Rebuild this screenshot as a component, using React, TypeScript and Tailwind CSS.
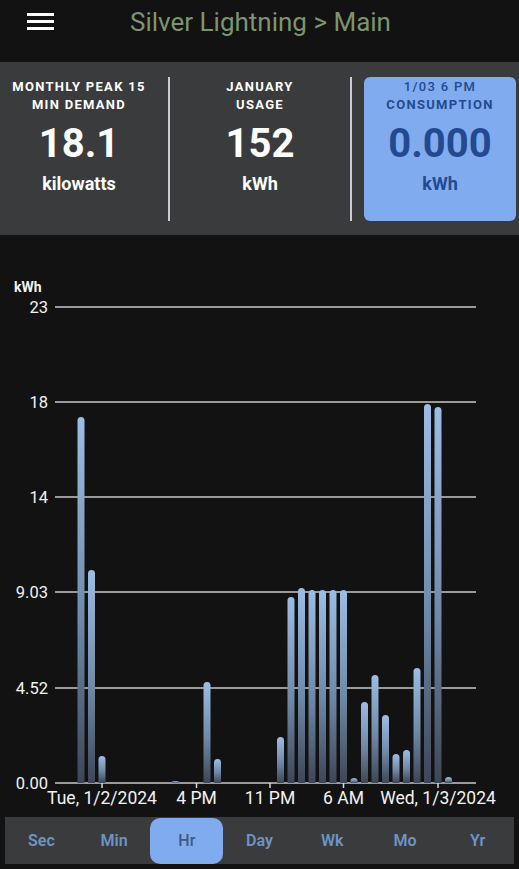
import React from "react";

const bars: [number, number][] = [
  [0, 366], [1, 213], [2, 27], [9, 2], [12, 101], [13, 24],
  [19, 46], [20, 186], [21, 195], [22, 193], [23, 193], [24, 193], [25, 193],
  [26, 5], [27, 81], [28, 108], [29, 68], [30, 29], [31, 33], [32, 115],
  [33, 379], [34, 376], [35, 6],
];

const grid = [
  { y: 307, label: "23" },
  { y: 402, label: "18" },
  { y: 497, label: "14" },
  { y: 592, label: "9.03" },
  { y: 688, label: "4.52" },
  { y: 783, label: "0.00" },
];

const ticks = [
  { i: 2, label: "Tue, 1/2/2024" },
  { i: 11, label: "4 PM" },
  { i: 18, label: "11 PM" },
  { i: 25, label: "6 AM" },
  { i: 34, label: "Wed, 1/3/2024" },
];

const tabs = ["Sec", "Min", "Hr", "Day", "Wk", "Mo", "Yr"];

const barX = (i: number) => 81 + i * 10.5;

function Stat({ lines, value, unit }: { lines: string[]; value: string; unit: string }) {
  return (
    <div className="flex flex-col items-center pt-[1px] text-white">
      {lines.map((l) => (
        <div key={l} className="text-[13px] leading-[18px] font-bold tracking-[1.3px]">
          {l}
        </div>
      ))}
      <div className="mt-[8px] text-[40px] leading-[44px] font-bold">{value}</div>
      <div className="mt-[7px] text-[18px] leading-[22px] font-bold">{unit}</div>
    </div>
  );
}

function Chart() {
  const base = 783;
  return (
    <svg width="519" height="582" viewBox="0 235 519 582" className="block">
      <defs>
        <linearGradient id="barGrad" x1="0" y1="0" x2="0" y2="1">
          <stop offset="0" stopColor="#9dbde4" />
          <stop offset="0.55" stopColor="#7089a8" />
          <stop offset="1" stopColor="#3d4656" />
        </linearGradient>
      </defs>
      <text x="14" y="292" fill="#f2f2f2" fontSize="14" fontWeight="700">
        kWh
      </text>
      {grid.map((g) => (
        <g key={g.label}>
          <line x1="55" x2="476" y1={g.y} y2={g.y} stroke="#c9c9c9" strokeWidth="1.5" />
          <text x="48" y={g.y + 6} fill="#f2f2f2" fontSize="16.5" textAnchor="end">
            {g.label}
          </text>
        </g>
      ))}
      {bars.map(([i, h]) => {
        const x = barX(i) - 3.5;
        const top = base - h;
        const r = Math.min(3.5, h / 2);
        return (
          <path
            key={i}
            d={`M${x},${base} V${top + r} A3.5,${r} 0 0 1 ${x + 7},${top + r} V${base} Z`}
            fill="url(#barGrad)"
          />
        );
      })}
      {ticks.map((t) => (
        <g key={t.label}>
          <line x1={barX(t.i)} x2={barX(t.i)} y1={base} y2={base + 5} stroke="#d8d8d8" strokeWidth="1.5" />
          <text x={barX(t.i)} y={base + 21} fill="#f2f2f2" fontSize="17.5" textAnchor="middle">
            {t.label}
          </text>
        </g>
      ))}
    </svg>
  );
}

export default function App() {
  return (
    <div className="w-[519px] h-[869px] overflow-hidden bg-[#121212] font-['Roboto',sans-serif]">
      <header className="h-[62px] flex items-start">
        <div className="ml-[27px] mt-[13px] flex flex-col gap-[4px]">
          <span className="block w-[27px] h-[3px] bg-white" />
          <span className="block w-[27px] h-[3px] bg-white" />
          <span className="block w-[27px] h-[3px] bg-white" />
        </div>
        <h1 className="ml-[76px] mt-[5px] text-[26px] leading-[34px] text-[#7c956f]">
          Silver Lightning &gt; Main
        </h1>
      </header>

      <section className="h-[173px] bg-[#3a3b3d] flex items-start pt-[15px]">
        <div className="w-[158px]">
          <Stat lines={["MONTHLY PEAK 15", "MIN DEMAND"]} value="18.1" unit="kilowatts" />
        </div>
        <div className="ml-[10px] w-[2px] h-[144px] bg-[#c8ccd2]" />
        <div className="w-[180px]">
          <Stat lines={["JANUARY", "USAGE"]} value="152" unit="kWh" />
        </div>
        <div className="w-[2px] h-[144px] bg-[#c8ccd2]" />
        <div className="ml-[12px] w-[152px] h-[144px] rounded-[6px] bg-[#80abee] flex flex-col items-center pt-[1px] text-[#234a91]">
          <div className="text-[13px] leading-[18px] font-medium tracking-[1.3px]">1/03 6 PM</div>
          <div className="text-[13px] leading-[18px] font-bold tracking-[1.3px]">CONSUMPTION</div>
          <div className="mt-[8px] text-[40px] leading-[44px] font-bold">0.000</div>
          <div className="mt-[7px] text-[18px] leading-[22px] font-bold">kWh</div>
        </div>
      </section>

      <Chart />

      <nav className="mx-[5px] h-[47px] bg-[#3a3b3d] flex">
        {tabs.map((t) =>
          t === "Hr" ? (
            <div
              key={t}
              className="flex-1 mt-[1px] rounded-[10px] bg-[#80abee] flex items-center justify-center text-[16px] font-medium text-[#3f5a80]"
            >
              {t}
            </div>
          ) : (
            <div
              key={t}
              className="flex-1 flex items-center justify-center text-[16px] font-semibold text-[#6e94c6]"
            >
              {t}
            </div>
          )
        )}
      </nav>
    </div>
  );
}
